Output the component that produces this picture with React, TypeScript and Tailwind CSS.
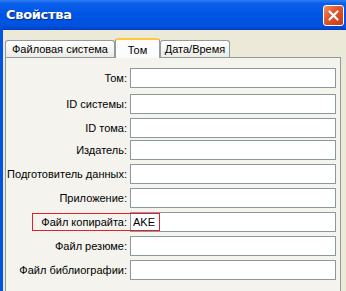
import React from 'react'

const rows = [
  { label: 'Том:', mt: 'mt-[10px]' },
  { label: 'ID системы:', mt: 'mt-[6px]' },
  { label: 'ID тома:', mt: 'mt-[4px]' },
  { label: 'Издатель:', mt: 'mt-[2px]' },
  { label: 'Подготовитель данных:', mt: 'mt-[4px]' },
  { label: 'Приложение:', mt: 'mt-[4px]' },
  { label: 'Файл копирайта:', mt: 'mt-[4px]', value: 'AKE', marked: true },
  { label: 'Файл резюме:', mt: 'mt-[4px]' },
  { label: 'Файл библиографии:', mt: 'mt-[4px]' },
]

function CloseButton() {
  return (
    <div className="w-[21px] h-[21px] rounded-[3px] border border-white bg-[linear-gradient(135deg,#f0926e_0%,#e2572d_40%,#c63b18_100%)] flex items-center justify-center">
      <svg width="13" height="13" viewBox="0 0 13 13">
        <path d="M2.5 2.5 L10.5 10.5 M10.5 2.5 L2.5 10.5" stroke="white" strokeWidth="2.2" strokeLinecap="round" />
      </svg>
    </div>
  )
}

export default function App() {
  return (
    <div className="w-[346px] h-[291px] overflow-hidden flex flex-col font-['Liberation_Sans',Tahoma,sans-serif] text-[11px] text-black">
      <div className="h-[30px] shrink-0 flex items-center justify-between pl-[6px] pr-[2px] bg-[linear-gradient(to_bottom,#2f7df5_0%,#0a5fe8_12%,#0055e5_45%,#0052df_85%,#003fc4_100%)]">
        <span className="text-white font-bold text-[13px] font-['DejaVu_Sans',sans-serif] [text-shadow:1px_1px_0_#0a2f8a] tracking-[-0.3px]">Свойства</span>
        <CloseButton />
      </div>
      <div className="flex flex-1 min-h-0">
        <div className="w-[3px] shrink-0 bg-[#0055e5]" />
        <div className="flex-1 bg-[#ece9d8] flex flex-col pl-[2px] pr-[5px]">
          <div className="flex items-end h-[27px] shrink-0">
            <div className="h-[17px] w-[110px] flex items-center justify-center border border-b-0 border-[#919b9c] rounded-t-[3px] bg-[linear-gradient(to_bottom,#ffffff,#ecebe6)]">
              Файловая система
            </div>
            <div className="relative z-10 h-[20px] -mb-px w-[45px] flex items-start pt-[2px] justify-center border border-b-0 border-[#919b9c] border-t-[#ffc83c] border-t-2 rounded-t-[3px] bg-[#fcfcfe]">
              Том
            </div>
            <div className="h-[17px] w-[70px] flex items-center justify-center border border-b-0 border-[#919b9c] rounded-t-[3px] bg-[linear-gradient(to_bottom,#ffffff,#ecebe6)]">
              Дата/Время
            </div>
          </div>
          <div className="flex-1 border border-[#919b9c] bg-[#f4f3ee] -mb-[10px] pr-[4px]">
            {rows.map((r) => (
              <div key={r.label} className={`relative flex items-center h-[20px] ${r.mt}`}>
                <div className="w-[122px] text-right pr-[1px] whitespace-nowrap">{r.label}</div>
                <div className="ml-[2px] flex-1 h-[20px] border border-[#8a9a9c] bg-white flex items-center pl-[2px]">
                  {r.value}
                </div>
                {r.marked && (
                  <div className="absolute left-[26px] top-[1px] w-[128px] h-[18px] border border-[#e0202a] pointer-events-none" />
                )}
              </div>
            ))}
          </div>
        </div>
      </div>
    </div>
  )
}
